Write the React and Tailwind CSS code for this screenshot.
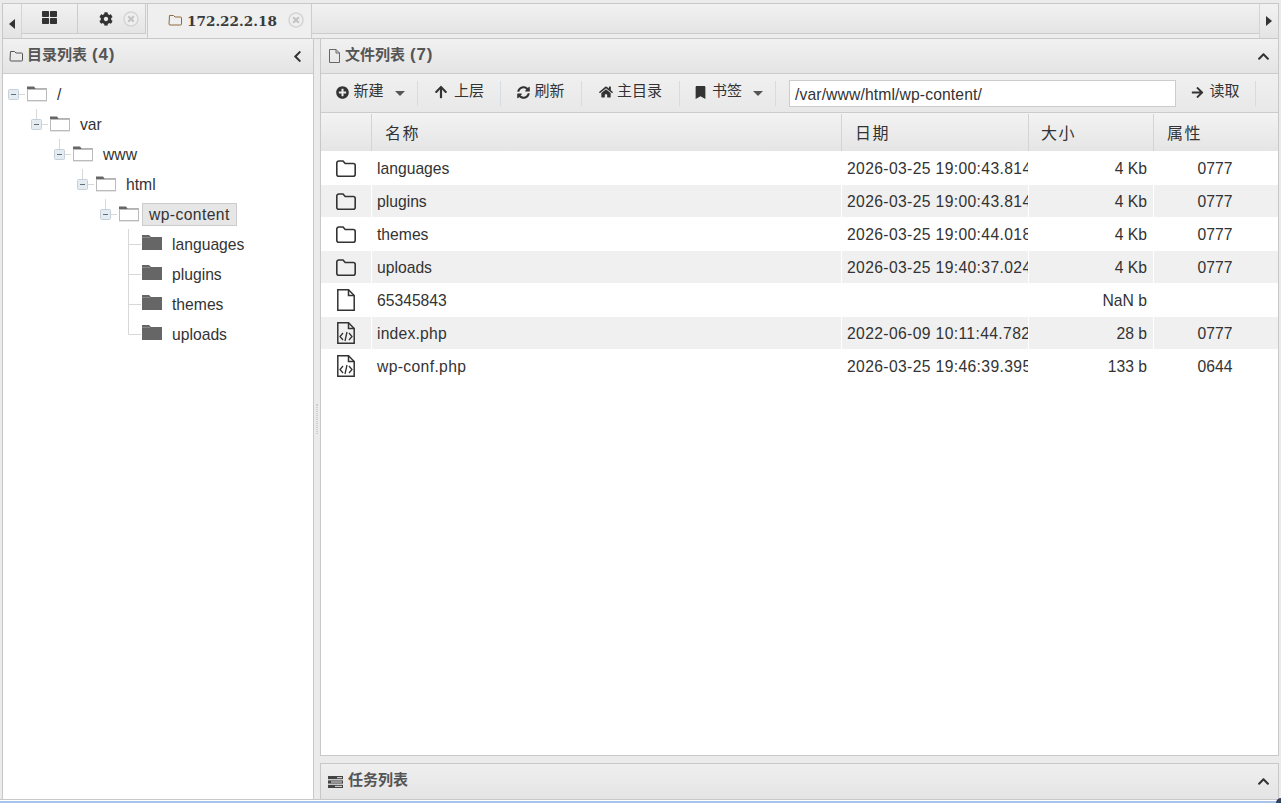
import React from "react";
import { FaThLarge, FaCog, FaPlusCircle, FaArrowUp, FaSyncAlt, FaHome, FaBookmark, FaArrowRight, FaChevronUp, FaChevronLeft } from "react-icons/fa";

const Thin = ({ className = "" }) => (
  <svg width="14" height="12" viewBox="0 0 14 12" className={className} fill="none" stroke="currentColor" strokeWidth="1">
    <path d="M1.500 1.500h4l1.500 1.500h5.500a1 1 0 0 1 1 1v6a1 1 0 0 1-1 1h-10.500a1 1 0 0 1-1-1z" />
  </svg>
);

const ThinFile = () => (
  <svg width="13" height="16" viewBox="0 0 13 16" fill="none" stroke="#666" strokeWidth="1">
    <path d="M1.500 1.500h6.500l3.500 3.500v9.500h-10zM8 1.500v3.500h3.500" />
  </svg>
);

const TaskIcon = () => (
  <svg width="15" height="12" viewBox="0 0 15 12">
    <rect x="0" y="0" width="15" height="3.200" fill="#444" />
    <rect x="0" y="4.400" width="15" height="3.200" fill="#444" />
    <rect x="0" y="8.800" width="15" height="3.200" fill="#444" />
    <rect x="9" y="1" width="5" height="1.200" fill="#ccc" />
    <rect x="3" y="5.400" width="11" height="1.200" fill="#ccc" />
    <rect x="7" y="9.800" width="7" height="1.200" fill="#ccc" />
  </svg>
);

const Close = () => (
  <svg width="16" height="16" viewBox="0 0 16 16" className="text-[#d4d4d4]">
    <circle cx="8" cy="8" r="7" fill="#efefef" stroke="currentColor" strokeWidth="1.500" />
    <path d="M5.200 5.200l5.600 5.600M10.800 5.200l-5.600 5.600" stroke="#c4c4c4" strokeWidth="2.200" />
  </svg>
);

const Expander = ({ stem }) => (
  <svg width="18" height="30" viewBox="0 0 18 30" className="shrink-0">
    {stem && <path d="M5.500 0V10" stroke="#d8d8d8" fill="none" />}
    <path d="M10 15.500H17" stroke="#d8d8d8" fill="none" />
    <rect x="0.500" y="10.500" width="10" height="10" rx="1" fill="#e4ebf1" stroke="#c5d0da" />
    <path d="M3 15.500H8" stroke="#5f6f7c" fill="none" />
  </svg>
);

const OpenFolder = () => (
  <svg width="22" height="18" viewBox="0 0 22 18" className="shrink-0">
    <path d="M1 1.500h7l1.500 2h11.500v1.500h-20z" fill="#666" />
    <rect x="1.500" y="4.500" width="19" height="11" fill="#fff" stroke="#bbb" />
    <path d="M1 16.500h20" stroke="#e6e6e6" />
  </svg>
);

const ClosedFolder = () => (
  <svg width="20" height="17" viewBox="0 0 20 17" className="shrink-0">
    <path d="M0 1h7l2 2h11v13h-20z" fill="#666" />
    <path d="M0 3.500h8" stroke="#888" />
  </svg>
);

const TreeOpen = ({ indent, label, stem, selected }) => (
  <div className="flex items-center h-[30px]" style={{ paddingLeft: indent }}>
    <Expander stem={stem} />
    <OpenFolder />
    {selected ? (
      <span className="ml-[2px] h-[23px] px-[6px] bg-[#e6e6e6] border border-[#cccccc] leading-[21px] tracking-[0.4px]">{label}</span>
    ) : (
      <span className="ml-[9px] mt-[2px]">{label}</span>
    )}
  </div>
);

const TreeLeaf = ({ label, last }) => (
  <div className="flex items-center h-[30px] pl-[125px]">
    <svg width="14" height="30" viewBox="0 0 14 30" className="shrink-0">
      <path d={last ? "M0.500 0V15.500H13" : "M0.500 0V30M0.500 15.500H13"} stroke="#d8d8d8" fill="none" />
    </svg>
    <span className="mb-[3px]"><ClosedFolder /></span>
    <span className="ml-[10px] mt-[2px]">{label}</span>
  </div>
);

const Sep = () => <div className="w-px h-[25px] bg-[#d3dde3] shrink-0" />;
const Caret = () => <span className="ml-[11px] mt-[1px] w-0 h-0 border-x-[5px] border-x-transparent border-t-[5px] border-t-[#555]" />;

const Btn = ({ icon, label, caret, className = "" }) => (
  <div className={`flex items-center justify-center h-[26px] shrink-0 text-[#333] ${className}`}>
    <span className="mb-[2px] stroke-current stroke-[20px]">{icon}</span>
    <span className="mb-[3px] text-[15px]">{label}</span>
    {caret && <Caret />}
  </div>
);

const FolderIcon = () => (
  <svg width="22" height="19" viewBox="0 0 22 19" fill="none" stroke="#333" strokeWidth="1.600">
    <path d="M1.800 4a2 2 0 0 1 2-2h4.200l2.200 2.500h8a2 2 0 0 1 2 2v8.700a2 2 0 0 1-2 2h-14.400a2 2 0 0 1-2-2z" />
  </svg>
);

const FileIcon = ({ code }) => (
  <svg width="20" height="24" viewBox="0 0 20 24" fill="none" stroke="#333" strokeWidth="1.500">
    <path d="M1.800 1.800h10.700l5.700 5.700v14.700h-16.400z" />
    <path d="M12.500 1.800v5.700h5.700" />
    {code && <path d="M7 12l-3 3.500 3 3.500M13 12l3 3.500-3 3.500M11 11l-2 9" strokeWidth="1.300" />}
  </svg>
);

const rows = [
  ["f", "languages", "2026-03-25 19:00:43.814", "4 Kb", "0777", ""],
  ["f", "plugins", "2026-03-25 19:00:43.814", "4 Kb", "0777", ""],
  ["f", "themes", "2026-03-25 19:00:44.018", "4 Kb", "0777", ""],
  ["f", "uploads", "2026-03-25 19:40:37.024", "4 Kb", "0777", ""],
  ["d", "65345843", "", "NaN b", "", ""],
  ["c", "index.php", "2022-06-09 10:11:44.782", "28 b", "0777", "tracking-[0.2px]"],
  ["c", "wp-conf.php", "2026-03-25 19:46:39.395", "133 b", "0644", "tracking-[0.35px]"],
];

const Row = ({ r, i }) => {
  const bg = i % 2 === 1 ? "bg-[#f0f0f0]" : "bg-white";
  const cell = `h-full ${bg} border-r border-white overflow-hidden whitespace-nowrap`;
  return (
    <div className="flex h-[33px] border-t border-white items-stretch">
      <div className={`${cell} w-[51px] flex items-center justify-center`}>
        {r[0] === "f" ? <FolderIcon /> : <FileIcon code={r[0] === "c"} />}
      </div>
      <div className={`${cell} w-[470px] pl-[5px] leading-[34px] ${r[5]}`}>{r[1]}</div>
      <div className={`${cell} w-[187px] pl-[5px] leading-[34px] tracking-[0.36px]`}>{r[2]}</div>
      <div className={`${cell} w-[125px] pr-[6px] text-right leading-[34px]`}>{r[3]}</div>
      <div className={`${bg} flex-1 text-center leading-[34px] pr-[2px]`}>{r[4]}</div>
    </div>
  );
};

const Head = ({ label, className }) => (
  <div className={`h-full flex items-center border-r border-[#d4d4d4] tracking-[1.500px] ${className}`}><span className="mt-[2px]">{label}</span></div>
);

const Chevron = ({ left }) => (
  <span className="ml-auto text-[13px] text-[#333] stroke-current stroke-[30px]">{left ? <FaChevronLeft /> : <FaChevronUp />}</span>
);

const Title = ({ label, count }) => (
  <>
    <span className="ml-[4px] text-[15px] mb-[2px]">{label}</span>
    <span className="ml-[5px] text-[17px] tracking-[0.8px] mb-[2px]">{count}</span>
  </>
);

export default function App() {
  return (
    <div className="w-[1281px] h-[803px] bg-[#ebebeb] text-[#333] text-[15.700px] overflow-hidden flex flex-col pt-[3px] px-[2px] relative" style={{ fontFamily: '"Liberation Sans", "Noto Sans CJK SC", sans-serif' }}>
      <div className="h-[36px] shrink-0 border-t border-x border-[#c8c8c8] border-b flex bg-[#ededed]">
        <div className="w-[19px] shrink-0 border-r border-[#d4d4d4] bg-gradient-to-b from-[#f2f2f2] to-[#e4e4e4] flex items-center justify-center pt-[6px]">
          <span className="w-0 h-0 border-y-[5px] border-y-transparent border-r-[6px] border-r-[#333]" />
        </div>
        <div className="w-[56px] h-[30px] shrink-0 border-r border-b border-[#cccccc] bg-gradient-to-b from-[#f2f2f2] to-[#e4e4e4] flex items-center justify-center text-[#333] text-[15px]"><span className="mb-[2px] mr-[1px]"><FaThLarge /></span></div>
        <div className="w-[68px] h-[30px] shrink-0 border-r border-b border-[#cccccc] bg-gradient-to-b from-[#f2f2f2] to-[#e4e4e4] flex items-center pl-[21px] gap-[10px] text-[14px]"><FaCog /><Close /></div>
        <div className="w-[165px] shrink-0 ml-[1px] border-x border-[#cccccc] bg-[#efefef] flex items-start pt-[7px] pl-[20px]">
          <Thin className="mt-[3px] text-[#8a6d3b]" />
          <span className="ml-[5px] font-bold text-[13.600px] leading-[20px] text-[#3a3a3a]" style={{ fontFamily: '"DejaVu Serif", serif' }}>172.22.2.18</span>
          <span className="ml-[11px] mt-[1px]"><Close /></span>
        </div>
        <div className="flex-1 h-[30px] border-b border-[#cccccc] bg-gradient-to-b from-[#f2f2f2] to-[#e4e4e4]" />
        <div className="w-[19px] shrink-0 border-l border-[#d4d4d4] bg-gradient-to-b from-[#f2f2f2] to-[#e4e4e4] flex items-center justify-center">
          <span className="w-0 h-0 border-y-[5px] border-y-transparent border-l-[6px] border-l-[#333]" />
        </div>
      </div>

      <div className="flex-1 flex min-h-0">
        <div className="w-[312px] shrink-0 flex flex-col border-x border-[#c8c8c8] bg-white">
          <div className="h-[35px] shrink-0 border-b border-[#cccccc] bg-gradient-to-b from-[#f1f1f1] to-[#e4e4e4] flex items-center pl-[6px] pr-[9px] font-bold text-[#555]">
            <Thin className="text-[#555] mb-[1px]" />
            <Title label="目录列表" count="(4)" />
            <Chevron left />
          </div>
          <div className="flex-1 pt-[5px]">
            <TreeOpen indent={5} label="/" />
            <TreeOpen indent={28} label="var" stem />
            <TreeOpen indent={51} label="www" stem />
            <TreeOpen indent={74} label="html" stem />
            <TreeOpen indent={97} label="wp-content" stem selected />
            <TreeLeaf label="languages" />
            <TreeLeaf label="plugins" />
            <TreeLeaf label="themes" />
            <TreeLeaf label="uploads" last />
          </div>
        </div>

        <div className="w-[6px] shrink-0 flex items-center justify-center">
          <div className="w-[2px] h-[30px] border-x border-dotted border-[#cfcfcf]" />
        </div>

        <div className="flex-1 min-w-0 flex flex-col">
          <div className="flex-1 min-h-0 flex flex-col border-x border-b border-[#c8c8c8] bg-white">
            <div className="h-[35px] shrink-0 border-b border-[#cccccc] bg-gradient-to-b from-[#f1f1f1] to-[#e4e4e4] flex items-center pl-[7px] pr-[8px] font-bold text-[#555]">
              <ThinFile />
              <Title label="文件列表" count="(7)" />
              <Chevron />
            </div>
            <div className="h-[39px] shrink-0 border-b border-[#cccccc] bg-gradient-to-b from-[#f0f0f0] to-[#e8e8e8] flex items-center">
              <Btn className="w-[96px] pl-[3px]" icon={<FaPlusCircle className="mr-[4px] text-[13px]" />} label="新建" caret />
              <Sep />
              <Btn className="w-[82px]" icon={<FaArrowUp className="mr-[6px] text-[14px]" />} label="上层" />
              <Sep />
              <Btn className="w-[80px]" icon={<FaSyncAlt className="mr-[4px] text-[13px]" />} label="刷新" />
              <Sep />
              <Btn className="w-[97px]" icon={<FaHome className="mr-[4px] text-[14px]" />} label="主目录" />
              <Sep />
              <Btn className="w-[95px] pl-[2px]" icon={<FaBookmark className="mr-[5px] text-[13px]" />} label="书签" caret />
              <Sep />
              <div className="ml-[13px] w-[387px] h-[27px] bg-white border border-[#cccccc] pl-[5px] leading-[27px] tracking-[0.12px] shrink-0">/var/www/html/wp-content/</div>
              <Btn className="w-[79px]" icon={<FaArrowRight className="mr-[5px] text-[13px]" />} label="读取" />
              <Sep />
            </div>
            <div className="h-[38px] shrink-0 flex bg-gradient-to-b from-[#f3f3f3] to-[#e5e5e5] pt-px text-[16px] text-[#333]">
              <Head className="w-[51px]" />
              <Head className="w-[470px] pl-[13px]" label="名称" />
              <Head className="w-[187px] pl-[13px]" label="日期" />
              <Head className="w-[125px] pl-[12px]" label="大小" />
              <div className="flex-1 flex items-center pl-[13px] tracking-[1.500px]"><span className="mt-[2px]">属性</span></div>
            </div>
            <div className="flex-1 min-h-0">
              {rows.map((r, i) => <Row key={r[1]} r={r} i={i} />)}
            </div>
          </div>
          <div className="h-[7px] shrink-0" />
          <div className="h-[36px] shrink-0 border-x border-t border-[#c8c8c8] bg-gradient-to-b from-[#efefef] to-[#e4e4e4] flex items-center pl-[7px] pr-[8px] font-bold text-[#555]">
            <TaskIcon />
            <span className="ml-[5px] text-[15px] mb-[3px]">任务列表</span>
            <Chevron />
          </div>
        </div>
      </div>
      <div className="h-[4px] shrink-0 -mx-[2px] bg-white border-t border-[#c8c8c8] border-b-2 border-b-[#a9c4ea]" />
      <div className="absolute right-0 bottom-0 w-[5px] h-[5px] bg-[#33415c] rounded-tl-[5px]" />
    </div>
  );
}
